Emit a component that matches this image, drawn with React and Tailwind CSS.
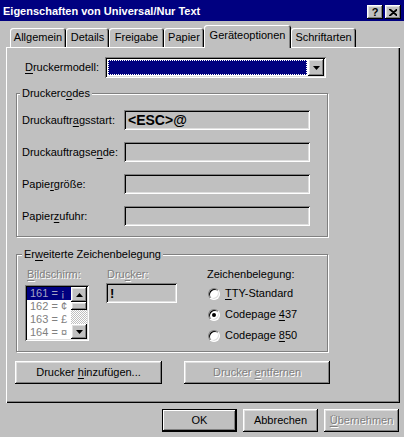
import React from 'react';

const raised = 'shadow-[inset_-1px_-1px_#000,inset_1px_1px_#fff,inset_-2px_-2px_#808080,inset_2px_2px_#dfdfdf]';
const sunken = 'shadow-[inset_1px_1px_#808080,inset_-1px_-1px_#fff,inset_2px_2px_#000,inset_-2px_-2px_#dfdfdf]';
const etched = 'border border-[#808080] shadow-[inset_1px_1px_#fff,1px_1px_#fff]';
const grey = 'text-[#808080] [text-shadow:1px_1px_0_#fff]';

// text with the mnemonic letter underlined
function Mn({ text, at }) {
  if (at < 0) return <span>{text}</span>;
  return (
    <span>
      {text.slice(0, at)}
      <span className="underline underline-offset-2">{text[at]}</span>
      {text.slice(at + 1)}
    </span>
  );
}

function Arrow({ up }) {
  return (
    <svg width="7" height="4" viewBox="0 0 7 4">
      <polygon points={up ? '3.5,0 7,4 0,4' : '0,0 7,0 3.5,4'} fill="#000" />
    </svg>
  );
}

function Button({ label, at, w, disabled, isDefault }) {
  return (
    <div
      className={`h-[23px] ${w} flex items-center justify-center bg-[#c0c0c0] ${
        isDefault ? 'border border-black shadow-[inset_-1px_-1px_#000,inset_1px_1px_#fff,inset_-2px_-2px_#808080]' : raised
      } ${disabled ? grey : ''}`}
    >
      <Mn text={label} at={at} />
    </div>
  );
}

function Field({ label, at, children }) {
  return (
    <div className="flex items-center h-[20px]">
      <div className="w-[102px]">
        <Mn text={label} at={at} />
      </div>
      <div className={`w-[186px] h-[20px] ${sunken} bg-[#c0c0c0] flex items-center pl-[4px]`}>{children}</div>
    </div>
  );
}

function Radio({ label, at, checked }) {
  return (
    <div className="flex items-center h-[21px] pl-[1px] gap-[5px]">
      <div className="w-[12px] h-[12px] rounded-full bg-white border border-t-[#808080] border-l-[#808080] border-r-white border-b-white shadow-[inset_1px_1px_#000,inset_-1px_-1px_#dfdfdf] flex items-center justify-center">
        {checked && <div className="w-[4px] h-[4px] rounded-full bg-black" />}
      </div>
      <Mn text={label} at={at} />
    </div>
  );
}

const tabs = [
  ['Allgemein', 56],
  ['Details', 43],
  ['Freigabe', 55],
  ['Papier', 40],
  ['Geräteoptionen', 87, true],
  ['Schriftarten', 65],
];

export default function App() {
  return (
    <div className="w-[404px] h-[437px] overflow-hidden bg-[#c0c0c0] text-black text-[11px] leading-[13px] font-['Liberation_Sans',Arial,sans-serif]">
      {/* title bar */}
      <div className="h-[21px] bg-[#000080] flex items-center pl-[3px] pr-[3px]">
        <div className="flex-1 text-white font-bold pt-[2px]">Eigenschaften von Universal/Nur Text</div>
        <div className="flex gap-[2px] pt-[5px] self-stretch">
          <div className={`w-[16px] h-[14px] bg-[#c0c0c0] ${raised} flex items-center justify-center font-bold text-[11px]`}>?</div>
          <div className={`w-[16px] h-[14px] bg-[#c0c0c0] ${raised} flex items-center justify-center`}>
            <svg width="8" height="7" viewBox="0 0 8 7">
              <path d="M0 0L8 7M1 0L9 7M8 0L0 7M9 0L1 7" stroke="#000" strokeWidth="1.2" />
            </svg>
          </div>
        </div>
      </div>

      {/* tabs */}
      <div className="mt-[4px] h-[22px] flex items-end pl-[10px]">
        {tabs.map(([t, w, sel]) => (
          <div
            key={t}
            style={{ width: w }}
            className={`flex items-center justify-center rounded-t-[3px] bg-[#c0c0c0] shadow-[inset_1px_1px_#fff,inset_-1px_0_#000,inset_-2px_0_#808080] ${
              sel ? 'h-[23px] -mb-px relative z-10 pb-[2px]' : 'h-[19px]'
            }`}
          >
            {t}
          </div>
        ))}
      </div>

      {/* panel */}
      <div className="ml-[6px] w-[394px] h-[356px] bg-[#c0c0c0] shadow-[inset_1px_1px_#fff,inset_-1px_-1px_#000,inset_-2px_-2px_#808080] pt-[10px]">
        <div className="flex items-center pl-[19px]">
          <div className="w-[80px]">
            <Mn text="Druckermodell:" at={0} />
          </div>
          <div className={`w-[221px] h-[21px] bg-white ${sunken} flex p-[2px]`}>
            <div className="flex-1 p-[1px]">
              <div className="h-full bg-[#000080] border border-dotted border-white" />
            </div>
            <div className={`w-[16px] h-full bg-[#c0c0c0] ${raised} flex items-center justify-center`}>
              <Arrow />
            </div>
          </div>
        </div>

        <fieldset className={`ml-[10px] mt-[9px] w-[312px] ${etched}`}>
          <legend className="ml-[3px] px-[2px] leading-[13px] bg-[#c0c0c0]">
            <Mn text="Druckercodes" at={8} />
          </legend>
          <div className="pl-[5px] pt-[10px] pb-[10px] flex flex-col gap-[12px]">
            <Field label="Druckauftragsstart:" at={10}>
              <span className="font-bold text-[14px]">&lt;ESC&gt;@</span>
            </Field>
            <Field label="Druckauftragsende:" at={14} />
            <Field label="Papiergröße:" at={5} />
            <Field label="Papierzufuhr:" at={6} />
          </div>
        </fieldset>

        <fieldset className={`ml-[10px] mt-[11px] w-[312px] ${etched}`}>
          <legend className="ml-[5px] px-[2px] leading-[13px] bg-[#c0c0c0]">
            <Mn text="Erweiterte Zeichenbelegung" at={2} />
          </legend>
          <div className="flex pt-[7px] pb-[5px] pl-[8px]">
            <div className="flex flex-col">
              <div className={`ml-[2px] h-[13px] ${grey}`}>
                <Mn text="Bildschirm:" at={0} />
              </div>
              <div className={`mt-[4px] w-[64px] h-[56px] bg-white ${sunken} p-[2px] flex`}>
                <div className="flex-1 overflow-hidden text-[#808080]">
                  <div className="h-[13px] pl-[3px] bg-[#000080] text-[#a4a4c4]">161 = ¡</div>
                  <div className="h-[13px] pl-[3px]">162 = ¢</div>
                  <div className="h-[13px] pl-[3px]">163 = £</div>
                  <div className="h-[13px] pl-[3px]">164 = ¤</div>
                </div>
                <div className="w-[16px] flex flex-col">
                  <div className={`h-[15px] bg-[#c0c0c0] ${raised} flex items-center justify-center`}>
                    <Arrow up />
                  </div>
                  <div className={`h-[8px] bg-[#c0c0c0] ${raised}`} />
                  <div className="flex-1 bg-[repeating-conic-gradient(#c0c0c0_0%_25%,#fff_0%_50%)] bg-[length:2px_2px]" />
                  <div className={`h-[15px] bg-[#c0c0c0] ${raised} flex items-center justify-center`}>
                    <Arrow />
                  </div>
                </div>
              </div>
            </div>

            <div className="ml-[17px] flex flex-col">
              <div className={`ml-[1px] h-[13px] ${grey}`}>
                <Mn text="Drucker:" at={3} />
              </div>
              <div className={`mt-[2px] w-[71px] h-[20px] bg-[#c0c0c0] ${sunken} flex items-center pl-[4px] font-bold text-[13px]`}>
                !
              </div>
            </div>

            <div className="ml-[30px] flex flex-col">
              <div className="h-[13px]">Zeichenbelegung:</div>
              <div className="mt-[2px]">
                <Radio label="TTY-Standard" at={0} />
                <Radio label="Codepage 437" at={9} checked />
                <Radio label="Codepage 850" at={9} />
              </div>
            </div>
          </div>
        </fieldset>

        <div className="flex ml-[9px] mt-[9px] gap-[22px]">
          <Button label="Drucker hinzufügen..." at={8} w="w-[147px]" />
          <Button label="Drucker entfernen" at={8} w="w-[146px]" disabled />
        </div>
      </div>

      {/* dialog buttons */}
      <div className="mt-[6px] flex justify-end gap-[6px] pr-[5px]">
        <Button label="OK" at={-1} w="w-[75px]" isDefault />
        <Button label="Abbrechen" at={-1} w="w-[75px]" />
        <Button label="Übernehmen" at={0} w="w-[75px]" disabled />
      </div>
    </div>
  );
}
